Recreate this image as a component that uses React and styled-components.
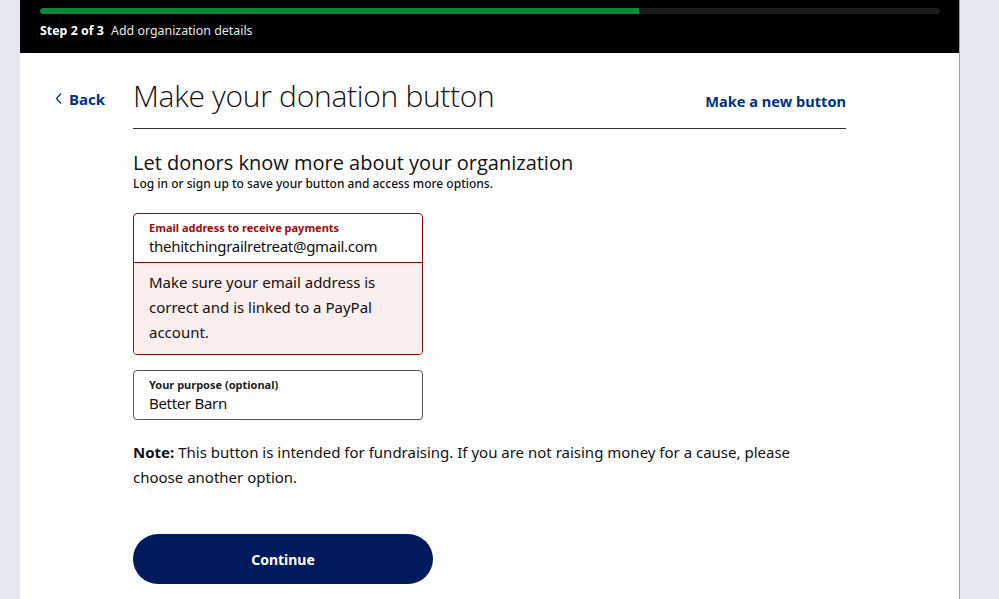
import React from "react";
import styled, { createGlobalStyle } from "styled-components";

const Global = createGlobalStyle`
  html, body { margin: 0; padding: 0; background: #e3e7f0; }
  body { font-family: "Noto Sans", "Open Sans", sans-serif; color: #111; }
  * { box-sizing: border-box; }
`;

const Page = styled.div`
  width: 999px;
  height: 599px;
  overflow: hidden;
  display: flex;
  background: #e3e7f0;
`;

const Panel = styled.div`
  margin-left: 20px;
  width: 940px;
  height: 599px;
  background: #fff;
  border-right: 1px solid #9aa0ab;
  display: flex;
  flex-direction: column;
`;

const Header = styled.div`
  background: #000;
  height: 53px;
  padding: 8px 19px 0 20px;
  display: flex;
  flex-direction: column;
`;

const Track = styled.div`
  height: 6px;
  border-radius: 3px;
  background: #1c1c1c;
  overflow: hidden;
`;

const Fill = styled.div`
  height: 100%;
  background: #0b8a35;
  border-radius: 3px 0 0 3px;
`;

const StepText = styled.div`
  margin-top: 9px;
  color: #e8e8e8;
  font-size: 12.4px;
  line-height: 16px;
  b { font-weight: 700; color: #fff; margin-right: 4px; }
`;

const Body = styled.div`
  display: flex;
  padding: 23px 0 0 35px;
`;

const BackLink = styled.a`
  width: 78px;
  padding-top: 13px;
  color: #003087;
  font-weight: 700;
  font-size: 15px;
  display: flex;
  align-items: flex-start;
  gap: 6px;
  text-decoration: none;
  svg { margin-top: 3px; }
`;

const Main = styled.div`
  width: 713px;
  display: flex;
  flex-direction: column;
`;

const TitleRow = styled.div`
  display: flex;
  justify-content: space-between;
  align-items: flex-start;
  border-bottom: 1px solid #333;
  height: 53px;
`;

const Title = styled.h1`
  margin: 0;
  font-family: "Open Sans", sans-serif;
  font-weight: 300;
  font-size: 30px;
  line-height: 40px;
  color: #111;
  letter-spacing: -0.3px;
`;

const NewLink = styled.a`
  margin-top: 15px;
  color: #003087;
  font-weight: 700;
  font-size: 14.6px;
  text-decoration: none;
`;

const SubHeading = styled.h2`
  margin: 21px 0 0;
  font-family: "Open Sans", sans-serif;
  font-weight: 400;
  font-size: 20px;
  line-height: 26px;
  color: #111;
`;

const Hint = styled.p`
  margin: 0;
  font-size: 12px;
  line-height: 16px;
  font-weight: 500;
`;

const FieldBox = styled.div`
  margin-top: ${(p) => p.$mt}px;
  width: 290px;
  border: 1px solid ${(p) => (p.$error ? "#8a0d0d" : "#555")};
  border-radius: 4px;
  overflow: hidden;
`;

const FieldInner = styled.div`
  height: 48px;
  padding: 6px 15px 0;
`;

const Label = styled.div`
  font-size: 11px;
  line-height: 15px;
  font-weight: 700;
  color: ${(p) => (p.$error ? "#a10a0a" : "#222")};
`;

const Value = styled.div`
  font-size: 15px;
  line-height: 22px;
  color: #111;
  letter-spacing: -0.3px;
`;

const ErrorText = styled.div`
  border-top: 1px solid #8a0d0d;
  background: #fbeeee;
  padding: 7px 15px 9px;
  font-size: 15px;
  line-height: 25px;
`;

const Note = styled.p`
  margin: 20px 0 0;
  max-width: 680px;
  font-size: 15px;
  line-height: 25px;
  b { font-weight: 700; }
`;

const Continue = styled.button`
  margin-top: 44px;
  width: 300px;
  height: 50px;
  border: none;
  border-radius: 25px;
  background: #001a5e;
  color: #fff;
  font-family: "Noto Sans", sans-serif;
  font-weight: 700;
  font-size: 14px;
`;

export default function App() {
  return (
    <>
      <Global />
      <Page>
        <Panel>
          <Header>
            <Track>
              <Fill style={{ width: `${(599 / 900) * 100}%` }} />
            </Track>
            <StepText>
              <b>Step 2 of 3</b> Add organization details
            </StepText>
          </Header>
          <Body>
            <BackLink href="#">
              <svg width="8" height="13" viewBox="0 0 8 13">
                <path d="M6 1.5 L1.5 6.5 L6 11.5" fill="none" stroke="#003087" strokeWidth="1.3" />
              </svg>
              Back
            </BackLink>
            <Main>
              <TitleRow>
                <Title>Make your donation button</Title>
                <NewLink href="#">Make a new button</NewLink>
              </TitleRow>
              <SubHeading>Let donors know more about your organization</SubHeading>
              <Hint>Log in or sign up to save your button and access more options.</Hint>
              <FieldBox $error $mt={21}>
                <FieldInner>
                  <Label $error>Email address to receive payments</Label>
                  <Value>thehitchingrailretreat@gmail.com</Value>
                </FieldInner>
                <ErrorText>
                  Make sure your email address is correct and is linked to a PayPal account.
                </ErrorText>
              </FieldBox>
              <FieldBox $mt={15}>
                <FieldInner>
                  <Label>Your purpose (optional)</Label>
                  <Value>Better Barn</Value>
                </FieldInner>
              </FieldBox>
              <Note>
                <b>Note:</b> This button is intended for fundraising. If you are not raising money for a cause, please choose another option.
              </Note>
              <Continue>Continue</Continue>
            </Main>
          </Body>
        </Panel>
      </Page>
    </>
  );
}
